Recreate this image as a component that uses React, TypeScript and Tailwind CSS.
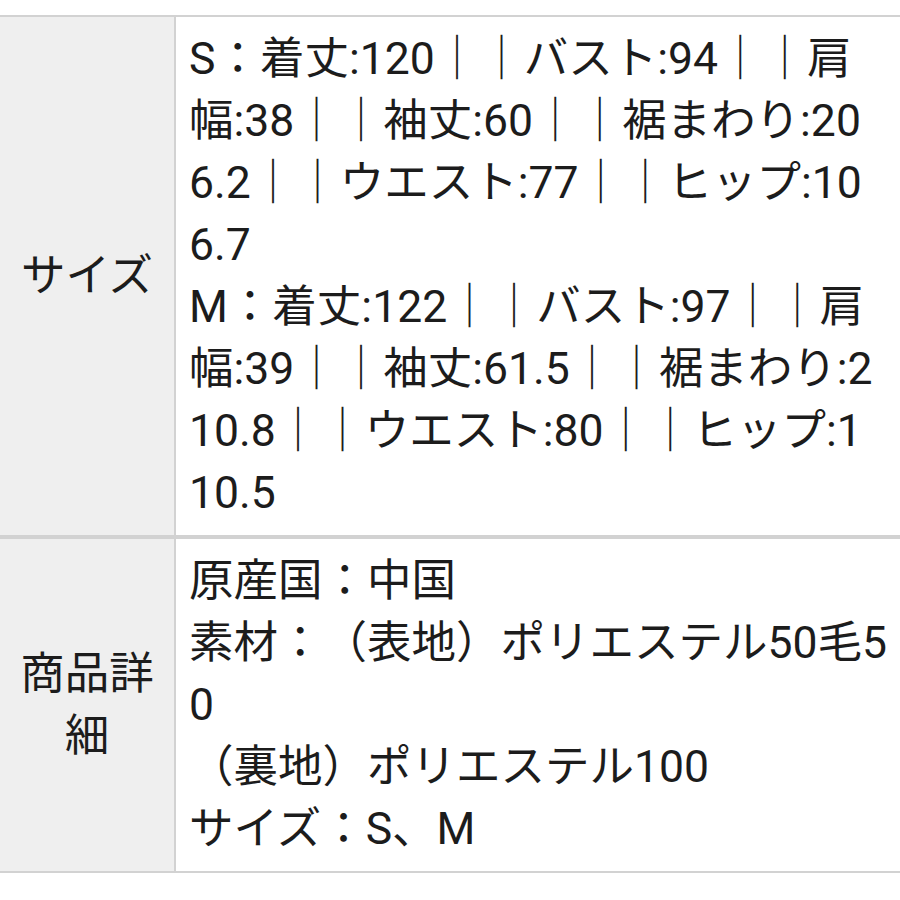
import React from 'react'

type Row = {
  label: string
  lines: string[]
  first?: boolean
}

// visual lines as they wrap in the narrow spec table
const rows: Row[] = [
  {
    label: 'サイズ',
    first: true,
    lines: [
      'S：着丈:120｜｜バスト:94｜｜肩',
      '幅:38｜｜袖丈:60｜｜裾まわり:20',
      '6.2｜｜ウエスト:77｜｜ヒップ:10',
      '6.7',
      'M：着丈:122｜｜バスト:97｜｜肩',
      '幅:39｜｜袖丈:61.5｜｜裾まわり:2',
      '10.8｜｜ウエスト:80｜｜ヒップ:1',
      '10.5'
    ]
  },
  {
    label: '商品詳細',
    lines: [
      '原産国：中国',
      '素材：（表地）ポリエステル50毛5',
      '0',
      '（裏地）ポリエステル100',
      'サイズ：S、M'
    ]
  }
]

const App = () => {
  return (
    <div
      className="min-h-[900px] w-[900px] bg-white pt-[15px] text-[44.5px] leading-[62px] text-[#1c1c1c] [text-spacing-trim:space-all]"
      style={{ fontFamily: 'Roboto, "Noto Sans CJK JP", sans-serif' }}
    >
      <div className="border-y-2 border-[#d2d2d2]">
        {rows.map((row) => (
          <div
            key={row.label}
            className={`flex ${row.first ? 'border-b-4 border-[#d2d2d2]' : ''}`}
          >
            <div className="flex w-[176px] shrink-0 items-center justify-center border-r-2 border-[#d2d2d2] bg-[#efefef] px-[14px] text-center">
              {row.label}
            </div>
            <div className="min-w-0 flex-1 overflow-hidden whitespace-nowrap px-[14px] py-[11px] pl-[13px]">
              {row.lines.map((line, i) => (
                <div key={i}>{line}</div>
              ))}
            </div>
          </div>
        ))}
      </div>
    </div>
  )
}

export default App
